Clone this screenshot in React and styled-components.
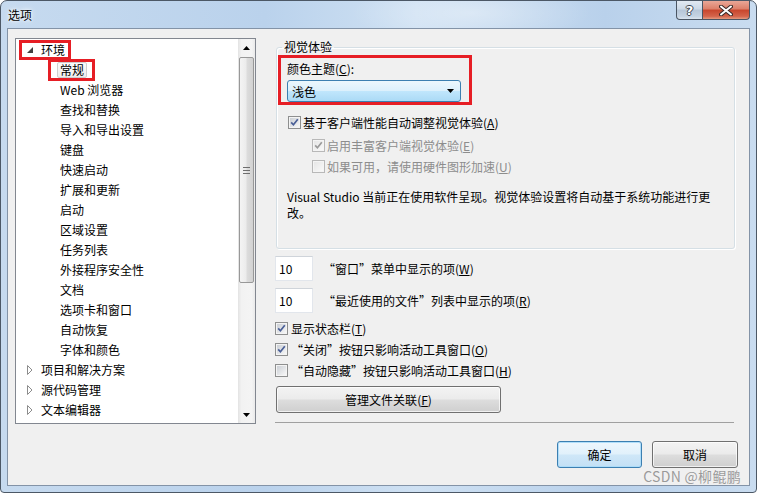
import React, { useId } from 'react';
import styled, { createGlobalStyle } from 'styled-components';

const GlobalStyle = createGlobalStyle`
  html, body {
    margin: 0;
    padding: 0;
    background: #fff;
  }
  body {
    font-family: "Noto Sans CJK SC", "Noto Sans", sans-serif;
    font-size: 12px;
    color: #000;
  }
`;

const Window = styled.div`
  position: relative;
  width: 757px;
  height: 493px;
  box-sizing: border-box;
  display: flex;
  flex-direction: column;
  border: 1px solid #4c5866;
  border-radius: 7px 7px 4px 4px;
  overflow: hidden;
  background:
    radial-gradient(ellipse 120px 30px at 470px 12px, rgba(255, 255, 255, 0.35), transparent),
    linear-gradient(90deg, #c6daef 0%, #bad2ec 35%, #cfe1f3 55%, #b9d1eb 80%, #c9dcf0 100%);
`;

const TitleBar = styled.div`
  height: 27px;
  display: flex;
  justify-content: space-between;
  align-items: flex-start;
  flex-shrink: 0;
`;

const Title = styled.div`
  padding: 6px 0 0 7px;
  line-height: 16px;
  font-size: 12px;
  text-shadow: 0 0 6px #fff, 0 0 3px #fff;
`;

const CaptionButtons = styled.div`
  display: flex;
  margin-right: 6px;
`;

const CapButton = styled.div`
  width: ${(p) => p.$w}px;
  height: 19px;
  box-sizing: border-box;
  border: 1px solid #4a5563;
  border-top: none;
  border-left: ${(p) => (p.$close ? 'none' : '1px solid #4a5563')};
  border-radius: ${(p) => (p.$close ? '0 0 4px 0' : '0 0 0 4px')};
  display: flex;
  align-items: center;
  justify-content: center;
  color: #fff;
  font-family: "DejaVu Sans", sans-serif;
  font-weight: bold;
  font-size: 13px;
  text-shadow: -1px 0 #3c4450, 1px 0 #3c4450, 0 -1px #3c4450, 0 1px #3c4450;
  background: ${(p) =>
    p.$close
      ? 'linear-gradient(#e9a797 0%, #dc7f69 45%, #c8452c 50%, #d4644b 85%, #e59a7f 100%)'
      : 'linear-gradient(#e1e9f2 0%, #ccd9e7 45%, #b6c6d8 50%, #c5d3e2 85%, #dbe5ef 100%)'};
`;

const Client = styled.div`
  flex: 1;
  margin: 0 6px 6px 6px;
  border: 1px solid #8393a7;
  background: #f0f0f0;
  display: flex;
  flex-direction: column;
`;

const Main = styled.div`
  display: flex;
  gap: 19px;
  padding: 9px 0 0 7px;
`;

/* ---------- tree ---------- */

const Tree = styled.div`
  width: 241px;
  height: 386px;
  box-sizing: border-box;
  border: 1px solid #828790;
  background: #fff;
  display: flex;
`;

const TreeList = styled.ul`
  flex: 1;
  margin: 0;
  padding: 1px 0 0 0;
  list-style: none;
  overflow: hidden;
`;

const TreeRow = styled.li`
  height: 20px;
  display: flex;
  align-items: center;
  padding-left: ${(p) => (p.$level === 0 ? 6 : 35)}px;
`;

const RowBox = styled.span`
  display: inline-flex;
  align-items: center;
  height: ${(p) => (p.$level === 0 ? 14 : 16)}px;
  padding: ${(p) => (p.$level === 0 ? '0 0 0 5px' : '0 5px 0 6px')};
  outline: ${(p) => (p.$mark ? '3px solid #e61e25' : 'none')};
`;

const Twisty = styled.span`
  width: 11px;
  display: flex;
  align-items: center;
`;

const ItemText = styled.span`
  display: inline-block;
  padding: 0 2px;
  line-height: 14px;
  white-space: nowrap;
  border: 1px solid ${(p) => (p.$selected ? '#cfcfcf' : 'transparent')};
  border-radius: 2px;
  background: ${(p) => (p.$selected ? 'linear-gradient(#fbfbfb, #eeeeee)' : 'transparent')};
`;

const ScrollBar = styled.div`
  width: 17px;
  display: flex;
  flex-direction: column;
  background: linear-gradient(90deg, #e3e3e3 0%, #f2f2f2 20%, #f4f4f4 80%, #eaeaea 100%);
`;

const ScrollArrow = styled.div`
  height: 17px;
  display: flex;
  align-items: center;
  justify-content: center;
  flex-shrink: 0;
`;

const Thumb = styled.div`
  height: 226px;
  margin: 1px 1px 0 1px;
  box-sizing: border-box;
  border: 1px solid #989898;
  border-radius: 2px;
  background: linear-gradient(90deg, #f4f4f4 0%, #ececec 45%, #dcdcdc 55%, #d2d2d2 100%);
  display: flex;
  align-items: center;
  justify-content: center;
`;

const Grip = styled.div`
  width: 7px;
  height: 7px;
  background: repeating-linear-gradient(#6e6e6e 0 1px, transparent 1px 3px);
`;

const ScrollSpace = styled.div`
  flex: 1;
`;

/* ---------- right side ---------- */

const Right = styled.div`
  width: 460px;
  display: flex;
  flex-direction: column;
  padding-top: 1px;
`;

const Group = styled.fieldset`
  margin: 0 0 0 1px;
  padding: 0 10px 27px 10px;
  border: 1px solid #d5dfe5;
  border-radius: 3px;
  box-shadow: inset 1px 1px 0 #fff, 1px 1px 0 #fff;
  min-width: 0;
`;

const Legend = styled.legend`
  margin-left: -5px;
  padding: 0 2px;
  line-height: 16px;
  font-size: 12px;
`;

const RedFrame = styled.div`
  display: inline-flex;
  flex-direction: column;
  align-self: flex-start;
  margin: 3px 0 0 -6px;
  padding: 3px 8px 0 6px;
  outline: 3px solid #e61e25;
`;

const FieldLabel = styled.div`
  line-height: 16px;
`;

const Combo = styled.div`
  width: 174px;
  height: 22px;
  margin-top: 3px;
  box-sizing: border-box;
  border: 1px solid #3c7fb1;
  border-radius: 3px;
  padding: 0 6px 0 4px;
  display: flex;
  align-items: center;
  justify-content: space-between;
  background: linear-gradient(#ecf7fd 0%, #dcf0fc 48%, #c0e6fc 52%, #abdaf6 100%);
`;

const GroupBody = styled.div`
  display: flex;
  flex-direction: column;
`;

const CheckRow = styled.label`
  display: flex;
  align-items: center;
  gap: ${(p) => p.$gap ?? 2}px;
  height: ${(p) => p.$h ?? 20}px;
  margin-top: ${(p) => p.$mt ?? 0}px;
  margin-left: ${(p) => p.$indent ?? 0}px;
  color: ${(p) => (p.$disabled ? '#8d8d8d' : '#000')};
  white-space: nowrap;
`;

const Note = styled.p`
  margin: 13px 0 0 0;
  width: 436px;
  line-height: 16px;
`;

const NumRow = styled.div`
  display: flex;
  align-items: center;
  gap: 10px;
  margin-top: 7px;
`;

const NumBox = styled.div`
  width: 38px;
  height: 25px;
  box-sizing: border-box;
  border: 1px solid #e2e6ec;
  border-top-color: #cfd4da;
  background: #fff;
  padding-left: 3px;
  display: flex;
  align-items: center;
`;

const OptionList = styled.div`
  display: flex;
  flex-direction: column;
  margin-top: 5px;
`;

const PushButton = styled.div`
  width: ${(p) => p.$w}px;
  height: 27px;
  box-sizing: border-box;
  border: 1px solid ${(p) => (p.$default ? '#3c7fb1' : '#707070')};
  border-radius: 3px;
  display: flex;
  align-items: center;
  justify-content: center;
  box-shadow: inset 0 0 0 1px ${(p) => (p.$default ? 'rgba(170, 220, 250, 0.9)' : 'rgba(255, 255, 255, 0.7)')};
  background: ${(p) =>
    p.$default
      ? 'linear-gradient(#eef7fd 0%, #e1f1fb 48%, #cfe7f8 52%, #c3e0f5 100%)'
      : 'linear-gradient(#f3f3f3 0%, #ebebeb 48%, #dddddd 52%, #cfcfcf 100%)'};
`;

const ManageButton = styled(PushButton)`
  margin: 5px 0 0 1px;
`;

const Separator = styled.div`
  height: 1px;
  margin-top: 9px;
  background: #a0a0a0;
  width: 459px;
`;

const Footer = styled.div`
  display: flex;
  justify-content: flex-end;
  gap: 10px;
  padding: 17px 11px 0 0;
`;

const Watermark = styled.div`
  position: absolute;
  right: 15px;
  top: 466px;
  font-size: 14px;
  line-height: 18px;
  color: rgba(125, 125, 125, 0.75);
  letter-spacing: 0.3px;
`;

/* ---------- drawings ---------- */

const ExpandedArrow = () => (
  <svg width="6" height="6" viewBox="0 0 6 6">
    <polygon points="6,0 6,6 0,6" fill="#404040" />
  </svg>
);

const CollapsedArrow = () => (
  <svg width="6" height="10" viewBox="0 0 6 10">
    <polygon points="0.5,0.5 5,5 0.5,9.5" fill="#fff" stroke="#8c8c8c" />
  </svg>
);

const ScrollTriangle = ({ down }) => (
  <svg width="7" height="4" viewBox="0 0 7 4">
    <polygon points={down ? '0,0 7,0 3.5,4' : '0,4 7,4 3.5,0'} fill="#000" />
  </svg>
);

const ComboArrow = () => (
  <svg width="7" height="4" viewBox="0 0 7 4">
    <polygon points="0,0 7,0 3.5,4" fill="#000" />
  </svg>
);

const CloseGlyph = () => (
  <svg width="14" height="11" viewBox="0 0 14 11">
    <path d="M2 1.5 L12 9.5 M12 1.5 L2 9.5" stroke="#3a2a28" strokeWidth="4" strokeLinecap="round" />
    <path d="M2 1.5 L12 9.5 M12 1.5 L2 9.5" stroke="#fff" strokeWidth="2" strokeLinecap="round" />
  </svg>
);

const CheckBox = ({ checked, disabled }) => {
  const id = useId();
  return (
    <svg width="13" height="13" viewBox="0 0 13 13" style={{ flexShrink: 0 }}>
      <defs>
        <linearGradient id={id} x1="0" y1="0" x2="1" y2="1">
          <stop offset="0" stopColor={disabled ? '#e6e6e6' : '#cbcfd5'} />
          <stop offset="1" stopColor={disabled ? '#f8f8f8' : '#f7f7f7'} />
        </linearGradient>
      </defs>
      <rect x="0.5" y="0.5" width="12" height="12" fill="#f4f4f4" stroke={disabled ? '#b8b8b8' : '#8e8f8f'} />
      <rect x="2" y="2" width="9" height="9" fill={`url(#${id})`} />
      {checked && (
        <path
          d="M3.2 6.4 L5.4 8.8 L9.8 3.2"
          fill="none"
          stroke={disabled ? '#9a9a9a' : '#4a5f97'}
          strokeWidth="1.7"
        />
      )}
    </svg>
  );
};

/* ---------- data ---------- */

const treeItems = [
  { label: '环境', level: 0, open: true, mark: true },
  { label: '常规', level: 1, selected: true, mark: true },
  { label: 'Web 浏览器', level: 1 },
  { label: '查找和替换', level: 1 },
  { label: '导入和导出设置', level: 1 },
  { label: '键盘', level: 1 },
  { label: '快速启动', level: 1 },
  { label: '扩展和更新', level: 1 },
  { label: '启动', level: 1 },
  { label: '区域设置', level: 1 },
  { label: '任务列表', level: 1 },
  { label: '外接程序安全性', level: 1 },
  { label: '文档', level: 1 },
  { label: '选项卡和窗口', level: 1 },
  { label: '自动恢复', level: 1 },
  { label: '字体和颜色', level: 1 },
  { label: '项目和解决方案', level: 0 },
  { label: '源代码管理', level: 0 },
  { label: '文本编辑器', level: 0 },
];

const Hot = ({ text, keyChar }) => (
  <>
    {text}(<u>{keyChar}</u>)
  </>
);

export default function App() {
  return (
    <>
      <GlobalStyle />
      <Window>
        <TitleBar>
          <Title>选项</Title>
          <CaptionButtons>
            <CapButton $w={27}>?</CapButton>
            <CapButton $w={47} $close>
              <CloseGlyph />
            </CapButton>
          </CaptionButtons>
        </TitleBar>

        <Client>
          <Main>
            <Tree>
              <TreeList>
                {treeItems.map((it) => (
                  <TreeRow key={it.label} $level={it.level}>
                    <RowBox $level={it.level} $mark={it.mark}>
                      {it.level === 0 && (
                        <Twisty>{it.open ? <ExpandedArrow /> : <CollapsedArrow />}</Twisty>
                      )}
                      <ItemText $selected={it.selected}>{it.label}</ItemText>
                    </RowBox>
                  </TreeRow>
                ))}
              </TreeList>
              <ScrollBar>
                <ScrollArrow>
                  <ScrollTriangle />
                </ScrollArrow>
                <Thumb>
                  <Grip />
                </Thumb>
                <ScrollSpace />
                <ScrollArrow>
                  <ScrollTriangle down />
                </ScrollArrow>
              </ScrollBar>
            </Tree>

            <Right>
              <Group>
                <Legend>视觉体验</Legend>
                <GroupBody>
                  <RedFrame>
                    <FieldLabel>
                      颜色主题(<u>C</u>):
                    </FieldLabel>
                    <Combo>
                      <span>浅色</span>
                      <ComboArrow />
                    </Combo>
                  </RedFrame>
                  <CheckRow $mt={10} $indent={1}>
                    <CheckBox checked />
                    <span>
                      <Hot text="基于客户端性能自动调整视觉体验" keyChar="A" />
                    </span>
                  </CheckRow>
                  <CheckRow $mt={3} $indent={25} $disabled>
                    <CheckBox checked disabled />
                    <span>
                      <Hot text="启用丰富客户端视觉体验" keyChar="E" />
                    </span>
                  </CheckRow>
                  <CheckRow $mt={1} $indent={25} $disabled>
                    <CheckBox disabled />
                    <span>
                      <Hot text="如果可用，请使用硬件图形加速" keyChar="U" />
                    </span>
                  </CheckRow>
                  <Note>
                    Visual Studio 当前正在使用软件呈现。视觉体验设置将自动基于系统功能进行更改。
                  </Note>
                </GroupBody>
              </Group>

              <NumRow>
                <NumBox>10</NumBox>
                <span>
                  <Hot text="“窗口”菜单中显示的项" keyChar="W" />
                </span>
              </NumRow>
              <NumRow>
                <NumBox>10</NumBox>
                <span>
                  <Hot text="“最近使用的文件”列表中显示的项" keyChar="R" />
                </span>
              </NumRow>

              <OptionList>
                <CheckRow $h={21} $gap={3}>
                  <CheckBox checked />
                  <span>
                    <Hot text="显示状态栏" keyChar="T" />
                  </span>
                </CheckRow>
                <CheckRow $h={21} $gap={3}>
                  <CheckBox checked />
                  <span>
                    <Hot text="“关闭”按钮只影响活动工具窗口" keyChar="O" />
                  </span>
                </CheckRow>
                <CheckRow $h={21} $gap={3}>
                  <CheckBox />
                  <span>
                    <Hot text="“自动隐藏”按钮只影响活动工具窗口" keyChar="H" />
                  </span>
                </CheckRow>
              </OptionList>

              <ManageButton $w={225}>
                <Hot text="管理文件关联" keyChar="F" />
              </ManageButton>
              <Separator />
            </Right>
          </Main>

          <Footer>
            <PushButton $w={85} $default>
              确定
            </PushButton>
            <PushButton $w={86}>取消</PushButton>
          </Footer>
        </Client>

        <Watermark>CSDN @柳鲲鹏</Watermark>
      </Window>
    </>
  );
}
